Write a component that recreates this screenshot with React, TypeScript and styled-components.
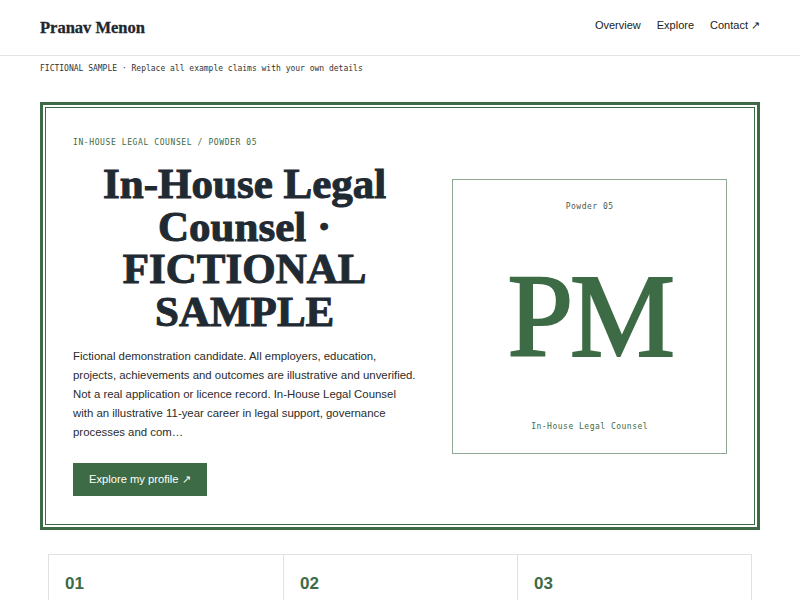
import React from "react";
import styled, { createGlobalStyle } from "styled-components";

const GREEN = "#3d6b45";

const Global = createGlobalStyle`
  html, body { margin: 0; padding: 0; background: #fff; }
  body { font-family: "Liberation Sans", Arial, sans-serif; color: #222; }
  * { box-sizing: border-box; }
`;

const Header = styled.header`
  height: 56px;
  border-bottom: 1px solid #e3e3e3;
  display: flex;
  align-items: center;
  justify-content: space-between;
  padding: 0 40px;
`;

const Brand = styled.div`
  font-family: "Liberation Serif", "Times New Roman", serif;
  font-weight: 700;
  font-size: 16.5px;
  color: #1f262d;
  -webkit-text-stroke: 0.3px #1f262d;
`;

const Nav = styled.nav`
  display: flex;
  gap: 16px;
  font-size: 11px;
  color: #222;
  margin-top: -4px;
`;

const NavLink = styled.a`
  color: inherit;
  text-decoration: none;
`;

const Main = styled.main`
  padding: 0 40px;
`;

const Note = styled.p`
  margin: 0;
  padding: 8px 0 0;
  font-family: "DejaVu Sans Mono", "Liberation Mono", monospace;
  font-size: 8px;
  color: #333;
  line-height: 10px;
`;

const Frame = styled.section`
  margin-top: 28px;
  border: 3px solid ${GREEN};
  box-shadow: inset 0 0 0 2px #fff, inset 0 0 0 3px ${GREEN};
  padding: 32px 30px 31px 30px;
  display: grid;
  grid-template-columns: 1.25fr 1fr;
  gap: 36px;
  align-items: center;
`;

const Left = styled.div`
  display: flex;
  flex-direction: column;
`;

const Eyebrow = styled.div`
  font-family: "DejaVu Sans Mono", "Liberation Mono", monospace;
  font-size: 8px;
  letter-spacing: 0.6px;
  color: ${GREEN};
  line-height: 12px;
`;

const Title = styled.h1`
  margin: 14px 0 0;
  font-family: "Liberation Serif", "Times New Roman", serif;
  font-weight: 700;
  font-size: 43px;
  line-height: 42.5px;
  letter-spacing: 0;
  text-align: center;
  color: #1f2a33;
  -webkit-text-stroke: 1px #1f2a33;
`;

const Lead = styled.p`
  margin: 14px 0 0;
  font-size: 11.4px;
  line-height: 19px;
  color: #2b2b2b;
`;

const Button = styled.a`
  align-self: flex-start;
  margin-top: 21px;
  background: ${GREEN};
  color: #fff;
  font-size: 11.2px;
  height: 33px;
  padding: 0 16px;
  display: inline-flex;
  align-items: center;
  text-decoration: none;
`;

const Card = styled.div`
  border: 1px solid #8fa894;
  aspect-ratio: 1 / 1;
  display: flex;
  flex-direction: column;
  align-items: center;
  justify-content: space-between;
  padding: 22px 0 22px;
`;

const CardLabel = styled.div<{ $muted?: boolean }>`
  font-family: "DejaVu Sans Mono", "Liberation Mono", monospace;
  font-size: 8px;
  letter-spacing: 0.5px;
  color: ${(p) => (p.$muted ? "#4d5a52" : GREEN)};
`;

const Monogram = styled.div`
  font-family: "Liberation Serif", "Times New Roman", serif;
  font-size: 118px;
  line-height: 1;
  color: ${GREEN};
  letter-spacing: -3px;
  -webkit-text-stroke: 2.2px ${GREEN};
`;

const Stats = styled.div`
  margin: 24px 8px 0;
  display: grid;
  grid-template-columns: repeat(3, 1fr);
  border: 1px solid #e2e2e2;
  border-bottom: none;
`;

const Stat = styled.div`
  padding: 19px 16px 40px;
  border-left: 1px solid #e2e2e2;
  &:first-child { border-left: none; }
`;

const StatNum = styled.div`
  font-size: 17px;
  font-weight: 700;
  color: ${GREEN};
`;

export default function App() {
  return (
    <>
      <Global />
      <Header>
        <Brand>Pranav Menon</Brand>
        <Nav>
          <NavLink href="#">Overview</NavLink>
          <NavLink href="#">Explore</NavLink>
          <NavLink href="#">Contact ↗</NavLink>
        </Nav>
      </Header>
      <Main>
        <Note>FICTIONAL SAMPLE · Replace all example claims with your own details</Note>
        <Frame>
          <Left>
            <Eyebrow>IN-HOUSE LEGAL COUNSEL / POWDER 05</Eyebrow>
            <Title>
              In-House Legal Counsel · FICTIONAL SAMPLE
            </Title>
            <Lead>
              Fictional demonstration candidate. All employers, education, projects, achievements and outcomes are illustrative and unverified. Not a real application or licence record. In-House Legal Counsel with an illustrative 11-year career in legal support, governance processes and com…
            </Lead>
            <Button href="#">Explore my profile ↗</Button>
          </Left>
          <Card>
            <CardLabel $muted>Powder 05</CardLabel>
            <Monogram>PM</Monogram>
            <CardLabel>In-House Legal Counsel</CardLabel>
          </Card>
        </Frame>
        <Stats>
          <Stat><StatNum>01</StatNum></Stat>
          <Stat><StatNum>02</StatNum></Stat>
          <Stat><StatNum>03</StatNum></Stat>
        </Stats>
      </Main>
    </>
  );
}
